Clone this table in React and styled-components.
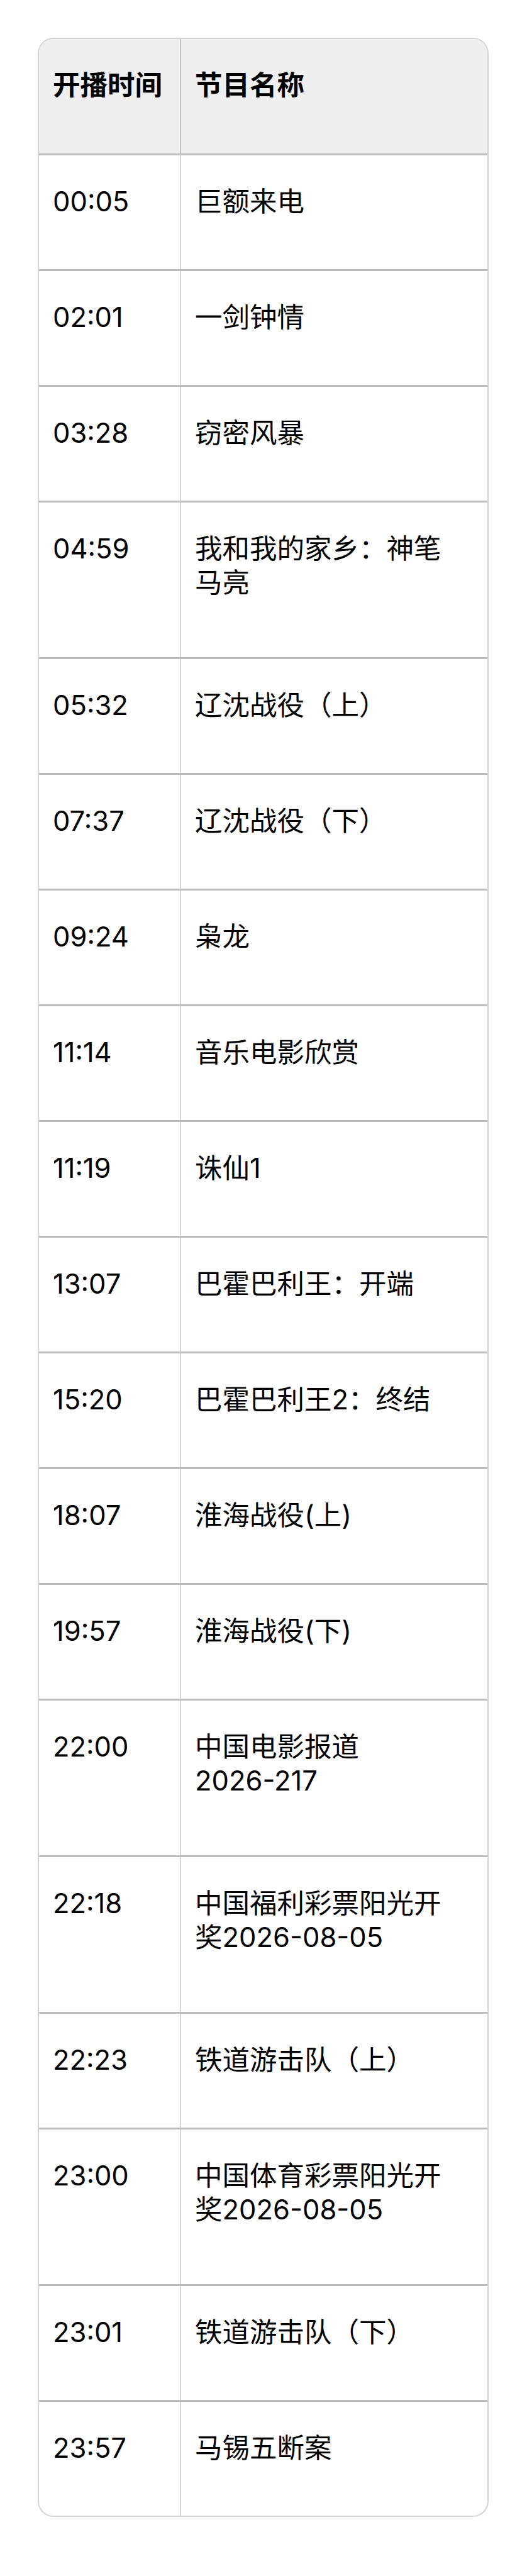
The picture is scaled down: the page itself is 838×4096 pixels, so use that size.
import styled, { createGlobalStyle } from "styled-components"

const schedule = [
  { time: "00:05", title: "巨额来电" },
  { time: "02:01", title: "一剑钟情" },
  { time: "03:28", title: "窃密风暴" },
  { time: "04:59", title: "我和我的家乡：神笔马亮", wrapped: true },
  { time: "05:32", title: "辽沈战役（上）" },
  { time: "07:37", title: "辽沈战役（下）" },
  { time: "09:24", title: "枭龙" },
  { time: "11:14", title: "音乐电影欣赏" },
  { time: "11:19", title: "诛仙1" },
  { time: "13:07", title: "巴霍巴利王：开端" },
  { time: "15:20", title: "巴霍巴利王2：终结" },
  { time: "18:07", title: "淮海战役(上)" },
  { time: "19:57", title: "淮海战役(下)" },
  { time: "22:00", title: "中国电影报道2026-217", wrapped: true },
  { time: "22:18", title: "中国福利彩票阳光开奖2026-08-05", wrapped: true },
  { time: "22:23", title: "铁道游击队（上）" },
  { time: "23:00", title: "中国体育彩票阳光开奖2026-08-05", wrapped: true },
  { time: "23:01", title: "铁道游击队（下）" },
  { time: "23:57", title: "马锡五断案" },
]

// keep runs like 2026-08-05 together so they wrap as one word
function Title({ text }) {
  return text
    .split(/(\d[\d-]*\d)/)
    .map((part, i) => (i % 2 ? <Word key={i}>{part}</Word> : part))
}

function App() {
  return (
    <>
      <GlobalStyle />
      <Page>
        <Card>
          <HeadRow>
            <TimeCell $head>开播时间</TimeCell>
            <NameCell $head>节目名称</NameCell>
          </HeadRow>
          {schedule.map((item) => (
            <Row key={item.time}>
              <TimeCell $tall={item.wrapped}>{item.time}</TimeCell>
              <NameCell $tall={item.wrapped}>
                <Title text={item.title} />
              </NameCell>
            </Row>
          ))}
        </Card>
      </Page>
    </>
  )
}

const GlobalStyle = createGlobalStyle`
  body {
    margin: 0;
    background: #fff;
    color: #000;
    font-family: Inter, "Noto Sans CJK SC", sans-serif;
  }
`

const Page = styled.div`
  padding: 60px 61px 0 60px;
`

const Card = styled.div`
  border: 2px solid #d4d4d4;
  border-radius: 25px;
  overflow: hidden;
`

const HeadRow = styled.div`
  display: grid;
  grid-template-columns: 224px 1fr;
  background: #efefef;
`

const Row = styled.div`
  display: grid;
  grid-template-columns: 224px 1fr;
  border-top: 3px solid #bcbcbc;
`

const Cell = styled.div`
  padding-top: 46px;
  padding-bottom: ${(p) => (p.$head ? 82 : p.$tall ? 92 : 81)}px;
  padding-left: 22px;
  font-size: 43.5px;
  line-height: 54px;
  font-weight: ${(p) => (p.$head ? 700 : 400)};
`

const TimeCell = styled(Cell)`
  padding-right: 8px;
  white-space: nowrap;
`

const NameCell = styled(Cell)`
  padding-right: 50px;
  border-left: 2px solid ${(p) => (p.$head ? "#c4c4c4" : "#d6d6d6")};
`

const Word = styled.span`
  white-space: nowrap;
`

export default App
